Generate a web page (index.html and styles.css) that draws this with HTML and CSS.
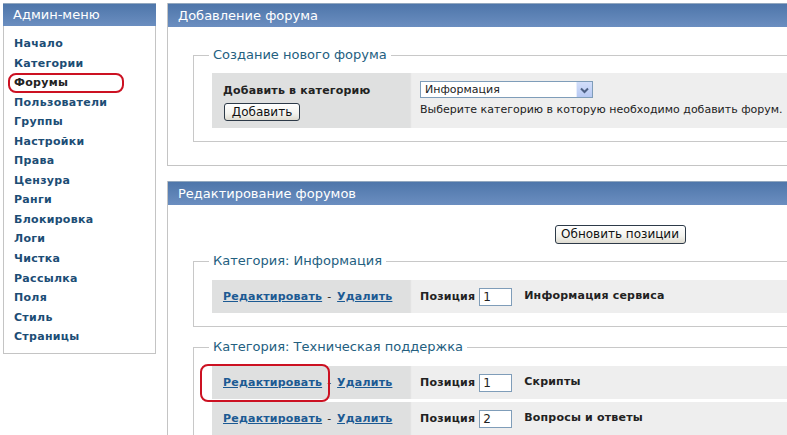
FILE: index.html
```html
<!DOCTYPE html>
<html lang="ru">
<head>
<meta charset="utf-8">
<title>Админ-меню</title>
<link rel="stylesheet" href="styles.css">
</head>
<body>
<div class="page">
  <aside class="sidebar">
    <div class="bar">Админ-меню</div>
    <ul class="menu">
      <li><a href="#">Начало</a></li>
      <li><a href="#">Категории</a></li>
      <li><a href="#" class="current">Форумы</a></li>
      <li><a href="#">Пользователи</a></li>
      <li><a href="#">Группы</a></li>
      <li><a href="#">Настройки</a></li>
      <li><a href="#">Права</a></li>
      <li><a href="#">Цензура</a></li>
      <li><a href="#">Ранги</a></li>
      <li><a href="#">Блокировка</a></li>
      <li><a href="#">Логи</a></li>
      <li><a href="#">Чистка</a></li>
      <li><a href="#">Рассылка</a></li>
      <li><a href="#">Поля</a></li>
      <li><a href="#">Стиль</a></li>
      <li><a href="#">Страницы</a></li>
    </ul>
  </aside>

  <main class="main">
    <section class="panel">
      <div class="bar">Добавление форума</div>
      <div class="panel-body">
        <fieldset class="group first">
          <legend>Создание нового форума</legend>
          <table class="grid">
            <tr>
              <td class="lc add-cell">
                <div class="label">Добавить в категорию</div>
                <button class="btn btn-add" type="button">Добавить</button>
              </td>
              <td class="rc add-right">
                <div class="select">
                  <span class="select-text">Информация</span>
                  <span class="select-arrow">
                    <svg width="15" height="14" viewBox="0 0 15 14"><path d="M4 5.5 L7.5 9 L11 5.5" fill="none" stroke="#4d6185" stroke-width="2"/></svg>
                  </span>
                </div>
                <div class="hint">Выберите категорию в которую необходимо добавить форум.</div>
              </td>
            </tr>
          </table>
        </fieldset>
      </div>
    </section>

    <section class="panel second">
      <div class="bar">Редактирование форумов</div>
      <div class="panel-body">
        <div class="update-row"><button class="btn btn-update" type="button">Обновить позиции</button></div>
        <fieldset class="group">
          <legend>Категория: Информация</legend>
          <table class="grid rows">
            <tr>
              <td class="lc"><a href="#" class="act">Редактировать</a><span class="dash">-</span><a href="#" class="act">Удалить</a></td>
              <td class="rc"><span class="pos">Позиция</span><span class="num">1</span><span class="fname">Информация сервиса</span></td>
            </tr>
          </table>
        </fieldset>
        <fieldset class="group next">
          <legend>Категория: Техническая поддержка</legend>
          <table class="grid rows">
            <tr>
              <td class="lc"><a href="#" class="act">Редактировать</a><span class="dash">-</span><a href="#" class="act">Удалить</a></td>
              <td class="rc"><span class="pos">Позиция</span><span class="num">1</span><span class="fname">Скрипты</span></td>
            </tr>
            <tr>
              <td class="lc"><a href="#" class="act">Редактировать</a><span class="dash">-</span><a href="#" class="act">Удалить</a></td>
              <td class="rc"><span class="pos">Позиция</span><span class="num">2</span><span class="fname">Вопросы и ответы</span></td>
            </tr>
          </table>
        </fieldset>
      </div>
    </section>
  </main>

  <span class="mark mark-forums"></span>
  <span class="mark mark-edit"></span>
</div>
</body>
</html>
```

FILE: styles.css
```css
html, body {
  margin: 0;
  padding: 0;
  background: #fff;
  overflow: hidden;
}
body {
  font-family: "DejaVu Sans", Verdana, sans-serif;
  font-size: 11px;
  color: #222;
}
.page {
  position: relative;
  display: flex;
  align-items: flex-start;
  gap: 11px;
  padding: 3px;
  width: 1100px;
}
.bar {
  height: 23px;
  line-height: 23px;
  border-top: 1px solid #93a8bf;
  background: linear-gradient(#4e76aa, #6b8ec0);
  color: #fff;
  font-size: 13px;
  padding-left: 10px;
  white-space: nowrap;
}
.sidebar {
  width: 153px;
  flex: none;
}
.sidebar .bar {
  height: 22px;
  line-height: 22px;
}
.menu {
  list-style: none;
  margin: 0;
  padding: 8px 0 6px 10px;
  border: 1px solid #c4c4c4;
  border-top: none;
}
.menu li {
  line-height: 19.55px;
}
.menu a {
  color: #1c4d75;
  font-weight: bold;
  text-decoration: none;
  letter-spacing: 0.3px;
}
.menu a.current {
  color: #222;
}
.main {
  width: 880px;
  flex: none;
}
.panel {
  border-left: 1px solid #c4c4c4;
  border-bottom: 1px solid #c4c4c4;
}
.panel.second {
  margin-top: 15px;
  border-bottom: none;
}
.panel-body {
  padding: 20px 0 23px 25px;
}
.group {
  margin: 0;
  padding: 10px 0 13px 18px;
  border: 1px solid #c8c8c8;
  border-right: none;
}
.group legend {
  margin-left: -3px;
  padding: 0 4px;
  font-size: 13px;
  line-height: 16px;
  color: #24607f;
}
.group.next {
  margin-top: 12px;
}
.second .group {
  padding-top: 11px;
}
.grid {
  border-collapse: collapse;
  width: 100%;
}
.grid td {
  padding: 0;
}
.lc {
  width: 198px;
  background: #dfe0e0;
  padding-left: 11px !important;
  box-sizing: border-box;
}
.rc {
  background: #eeeeee;
  padding-left: 10px !important;
  box-shadow: inset 2px 0 1px -1px #e2e2e2;
}
.add-cell, .add-right {
  vertical-align: top;
}
.add-cell {
  padding-top: 11px !important;
  padding-bottom: 7px !important;
}
.label {
  font-weight: bold;
  line-height: 14px;
  letter-spacing: 0.2px;
}
.btn {
  font-family: "DejaVu Sans", Verdana, sans-serif;
  font-size: 12px;
  color: #111;
  border: 1px solid #2d3a48;
  border-radius: 3px;
  background: linear-gradient(#ffffff, #f3f3ee 60%, #dedbd0);
  padding: 0;
  margin: 0;
  height: 18px;
  line-height: 15px;
}
.btn-add {
  display: block;
  margin-top: 5px;
  margin-left: 1px;
  width: 76px;
}
.add-right {
  padding-top: 8px !important;
}
.select {
  display: flex;
  align-items: center;
  width: 171px;
  height: 15px;
  border: 1px solid #7f9db9;
  background: #fff;
  padding: 0;
}
.select-text {
  flex: 1;
  padding-left: 4px;
  line-height: 15px;
}
.select-arrow {
  display: flex;
  align-items: center;
  justify-content: center;
  width: 15px;
  height: 15px;
  background: linear-gradient(#d2defa, #b7c9f3);
  border-left: 1px solid #e7eefc;
}
.hint {
  margin-top: 5px;
  line-height: 14px;
  white-space: nowrap;
  letter-spacing: 0;
}
.update-row {
  display: flex;
  justify-content: center;
  margin-bottom: 9px;
}
.btn-update {
  width: 131px;
  height: 19px;
  font-size: 12px;
}
.rows td {
  height: 33px;
  vertical-align: middle;
}
.rows tr + tr td {
  border-top: 3px solid #fff;
}
.act {
  color: #1c5a93;
  font-weight: bold;
  text-decoration: underline;
  letter-spacing: 0.2px;
}
.dash {
  margin: 0 6px 0 5px;
}
.pos {
  font-weight: bold;
  letter-spacing: 0.2px;
}
.num {
  display: inline-block;
  vertical-align: middle;
  box-sizing: border-box;
  width: 33px;
  height: 18px;
  line-height: 16px;
  border: 1px solid #7f9db9;
  background: #fff;
  padding-left: 3px;
  margin-left: 4px;
  font-size: 12px;
}
.fname {
  font-weight: bold;
  margin-left: 12px;
  letter-spacing: 0.2px;
  position: relative;
  top: -1px;
}
.mark {
  position: absolute;
  border: 2px solid #cc1122;
  border-radius: 8px;
  box-sizing: border-box;
  pointer-events: none;
}
.mark-forums {
  left: 8px;
  top: 73px;
  width: 116px;
  height: 20px;
}
.mark-edit {
  left: 200px;
  top: 364px;
  width: 130px;
  height: 38px;
}
```
